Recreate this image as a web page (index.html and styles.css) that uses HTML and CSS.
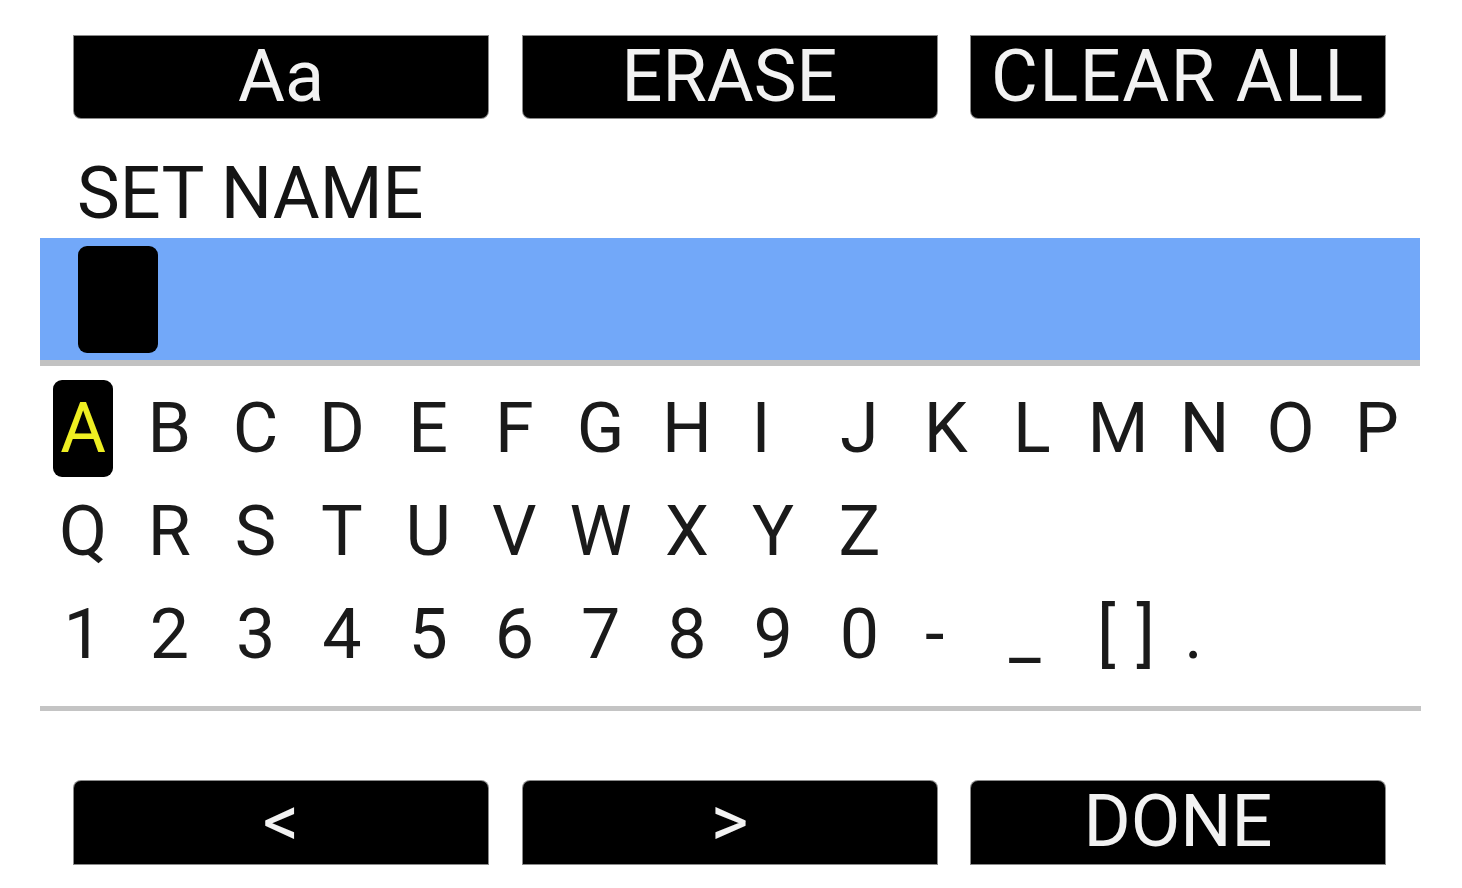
FILE: index.html
```html
<!DOCTYPE html>
<html>
<head>
<meta charset="utf-8">
<link rel="stylesheet" href="styles.css">
</head>
<body>
<div class="screen">
  <div class="toolbar top">
    <div class="btn">Aa</div>
    <div class="btn">ERASE</div>
    <div class="btn wide">CLEAR ALL</div>
  </div>
  <div class="label">SET NAME</div>
  <div class="field"><div class="cursor"></div></div>
  <div class="keys">
    <div class="row">
      <div class="key"><span class="sel">A</span></div>
      <div class="key">B</div><div class="key">C</div><div class="key">D</div>
      <div class="key">E</div><div class="key">F</div><div class="key">G</div>
      <div class="key">H</div><div class="key narrow">I</div><div class="key">J</div>
      <div class="key">K</div><div class="key">L</div><div class="key">M</div>
      <div class="key">N</div><div class="key">O</div><div class="key">P</div>
    </div>
    <div class="row">
      <div class="key">Q</div><div class="key">R</div><div class="key">S</div>
      <div class="key">T</div><div class="key">U</div><div class="key">V</div>
      <div class="key">W</div><div class="key">X</div><div class="key">Y</div>
      <div class="key">Z</div>
    </div>
    <div class="row">
      <div class="key">1</div><div class="key">2</div><div class="key">3</div>
      <div class="key">4</div><div class="key">5</div><div class="key">6</div>
      <div class="key">7</div><div class="key">8</div><div class="key">9</div>
      <div class="key">0</div><div class="key dash">-</div><div class="key under">_</div>
      <div class="key group"><span>[</span><span>]</span><span class="dot">.</span></div>
    </div>
  </div>
  <div class="rule"></div>
  <div class="toolbar bottom">
    <div class="btn">&lt;</div>
    <div class="btn">&gt;</div>
    <div class="btn">DONE</div>
  </div>
</div>
</body>
</html>
```

FILE: styles.css
```css
* { box-sizing: border-box; }
html, body { margin: 0; padding: 0; background: #ffffff; }
body { font-family: Roboto, "Liberation Sans", sans-serif; }

.screen {
  width: 1462px;
  height: 888px;
  overflow: hidden;
  background: #ffffff;
}

.toolbar {
  display: grid;
  grid-template-columns: repeat(3, 414px);
  column-gap: 34.5px;
  padding-left: 74px;
}
.toolbar.top { padding-top: 36px; }
.toolbar.bottom { margin-top: 70px; }

.btn {
  height: 82px;
  background: #000000;
  color: #f2f2f2;
  font-size: 72px;
  line-height: 82px;
  text-align: center;
  box-shadow: 0 0 0 1px #8a8a8a;
}
.btn.wide { letter-spacing: 1.5px; }
.top .btn { border-radius: 0 0 7px 7px; }
.bottom .btn { border-radius: 7px 7px 0 0; height: 83px; line-height: 81px; }

.label {
  height: 120px;
  padding-top: 39px;
  padding-left: 77px;
  font-size: 72px;
  line-height: 73px;
  color: #141414;
}

.field {
  margin-left: 40px;
  width: 1380px;
  height: 128px;
  background: #72a8f9;
  border-bottom: 6px solid #c2c2c2;
  display: flex;
  align-items: center;
  padding-left: 38px;
}
.cursor {
  width: 80px;
  height: 107px;
  background: #000000;
  border-radius: 9px;
}

.keys {
  margin-top: 11px;
  margin-left: 40px;
  width: 1380px;
}
.row {
  display: grid;
  grid-template-columns: repeat(16, 86.25px);
  height: 103px;
}
.key {
  display: flex;
  align-items: center;
  justify-content: center;
  font-size: 70px;
  line-height: 103px;
  color: #1a1a1a;
}
.sel {
  width: 60px;
  height: 97px;
  background: #000000;
  color: #eeee22;
  border-radius: 9px;
  display: flex;
  align-items: center;
  justify-content: center;
  line-height: 97px;
}
.key.narrow { padding-right: 24px; }
.key.dash { padding-right: 22px; }
.key.under { padding-right: 14px; }
.key.group {
  grid-column: 13 / span 3;
  justify-content: flex-start;
  padding-left: 22px;
  gap: 21px;
}
.key.group .dot { margin-left: 8px; }

.rule {
  margin-top: 20px;
  margin-left: 40px;
  width: 1381px;
  height: 5px;
  background: #c4c4c4;
}
```
